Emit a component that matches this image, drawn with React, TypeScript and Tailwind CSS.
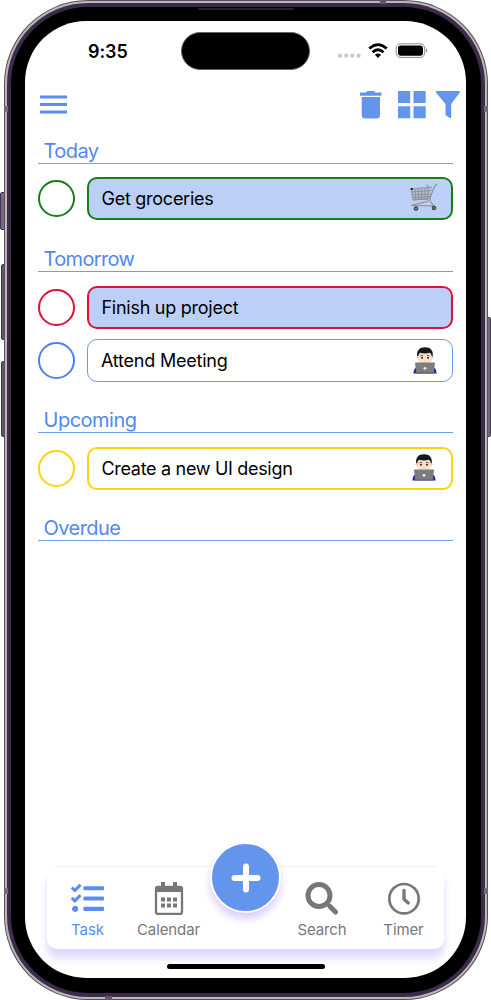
import React from "react";
import { FaTasks } from "react-icons/fa";

function Cart() {
  return (
    <svg width="28" height="29" viewBox="0 0 28 29" fill="none">
      <path d="M1 6L22 4L20 15L3 17Z" fill="#b4bccb" />
      <path d="M1 6L22 4M1.5 9L21.5 7.500M2 12L21 11M2.500 14.500L20.500 13.500M3 17L20 15M1 6L3 17M4.500 6L6 16.500M8 5.500L9 16.500M11.500 5L12 16M15 5L15 16M18.500 4.500L17.500 15.500" stroke="#7f8591" strokeWidth=".7" />
      <path d="M27 .8L24.500 3.500L20 15L21 19.500L24 23M17 1.500L18 5M3 17L17 16L19 18L3 22L1.500 22.500L25 23" stroke="#8c8c90" strokeWidth="1.100" />
      <path d="M16 18.500H21" stroke="#bbb1a7" strokeWidth="1.800" />
      <rect x=".5" y="5" width="2.500" height="2" fill="#2e333b" />
      <circle cx="6" cy="25.500" r="2.300" fill="#494545" />
      <circle cx="24" cy="25" r="2.300" fill="#494545" />
      <circle cx="6" cy="25.500" r=".8" fill="#aaa" />
      <circle cx="24" cy="25" r=".8" fill="#aaa" />
    </svg>
  );
}

function Technologist() {
  return (
    <svg width="24" height="27" viewBox="0 0 24 27">
      <path d="M.3 26.500L1 23Q2 20 6 19.500H18Q22 20 23 23L23.700 26.500Z" fill="#2027ae" />
      <path d="M8.500 14H15.500V19H8.500Z" fill="#e8bfa5" />
      <ellipse cx="12" cy="9.800" rx="7.300" ry="8" fill="#f8dec9" />
      <circle cx="4.700" cy="10.500" r="1.200" fill="#efcdb4" />
      <circle cx="19.300" cy="10.500" r="1.200" fill="#efcdb4" />
      <path d="M4.300 9.500C3.300 3.500 6.500.2 12 .2C17.500.2 20.700 3.500 19.700 9.500L18.700 9Q18.500 7 17 5.800Q12 7 7 5.800Q5.500 7 5.300 9Z" fill="#171819" />
      <path d="M7.500 8.800Q9 7.900 10 8.700M14 8.700Q15 7.900 16.500 8.800" stroke="#50382f" strokeWidth=".8" fill="none" />
      <circle cx="9" cy="10.700" r="1" fill="#302622" />
      <circle cx="15" cy="10.700" r="1" fill="#302622" />
      <path d="M2.800 15.500H21.200Q22 15.500 21.900 16.500L20.800 26H3.200L2.100 16.500Q2 15.500 2.800 15.500Z" fill="#7c7d7f" />
      <path d="M2.500 25.300H21.500V26.500H2.500Z" fill="#66676a" />
      <circle cx="12" cy="21.300" r="1.400" fill="#eee" />
    </svg>
  );
}

function Heading({ children, space }: { children: string; space: string }) {
  return (
    <h2 className={`${space} flex h-[30px] shrink-0 items-end border-b border-[#6f9df0] pl-[5.5px] text-[20px] leading-[24px] text-[#5089ee]`}>
      {children}
    </h2>
  );
}

function Row({ text, circle, card, icon, textStyle }: { text: string; circle: string; card: string; icon?: React.ReactNode; textStyle: string }) {
  return (
    <div className="flex h-[43px] shrink-0 items-center">
      <div className={`size-[37px] shrink-0 rounded-full border-2 ${circle}`} />
      <div className={`ml-[12px] flex h-full flex-1 items-center justify-between rounded-[10px] ${card}`}>
        <span className={`whitespace-nowrap pt-[1px] text-[18px] leading-[24px] text-black ${textStyle}`}>{text}</span>
        {icon}
      </div>
    </div>
  );
}

export default function App() {
  return (
    <div className="relative h-[1000px] w-[491px] overflow-hidden bg-white font-['Inter',sans-serif]">
      <div className="absolute left-0 top-[192px] h-[38px] w-[6px] rounded-l-[2px] border border-[#40364b] bg-[#776b80]" />
      <div className="absolute left-[1px] top-[264px] h-[76px] w-[5px] rounded-l-[2px] border border-[#40364b] bg-[#64576d]" />
      <div className="absolute left-[1px] top-[361px] h-[76px] w-[5px] rounded-l-[2px] border border-[#40364b] bg-[#64576d]" />
      <div className="absolute right-0 top-[317px] h-[120px] w-[5px] rounded-r-[2px] border border-[#40364b] bg-[#776b80]" />

      <div className="relative ml-[4px] h-[1000px] w-[484px] rounded-[84px] bg-[#594e5d] p-[1px]">
        <div className="h-full rounded-[83px] bg-[#bfb7b5] p-[2px]">
          <div className="h-full rounded-[81px] bg-[#3b2c4b] px-[4px] py-[4px]">
            <div className="h-full rounded-[77px] bg-black px-[14px] py-[14px]">
              <div className="flex h-[957px] w-[441px] flex-col overflow-hidden rounded-[61px] bg-white">
                <header className="flex h-[60px] shrink-0 items-start pl-[63px]">
                  <span className="mt-[19px] w-[93px] text-[18px] font-semibold leading-[24px] tracking-[-0.1px] text-black">9:35</span>
                  <div className="mt-[11px] h-[38px] w-[129px] rounded-full border border-[#666] bg-black" />
                  <svg className="ml-[27px] mt-[20px]" width="91" height="20" viewBox="337 41 91 20" fill="none">
                    <g fill="#c8c8c8">
                      <circle cx="340" cy="55.700" r="2.100" /><circle cx="346.200" cy="55.700" r="2.100" /><circle cx="352.400" cy="55.700" r="2.100" /><circle cx="358.600" cy="55.700" r="2.100" />
                    </g>
                    <path d="M369.300 48.600Q378 40.600 386.700 48.600M372.500 52.200Q378 47.300 383.500 52.200" stroke="#000" strokeWidth="2.700" />
                    <path d="M374.900 54.800Q378 52.400 381.100 54.800L378 57.900Z" fill="#000" />
                    <rect x="396.200" y="43.800" width="28.500" height="13.600" rx="4.300" stroke="#888" />
                    <rect x="398" y="45.500" width="25" height="10.200" rx="2.700" fill="#000" />
                    <path d="M426 48.500Q428.500 50.500 426 52.700Z" fill="#888" />
                  </svg>
                </header>

                <nav className="flex h-[47px] shrink-0 items-start justify-between pl-[15px] pr-[5px] pt-[10px]">
                  <svg className="mt-[3px]" width="27" height="21" viewBox="0 0 27 21" fill="#5b8def">
                    <path d="M0 1.500H27V4.500H0ZM0 9H27V12H0ZM0 16.500H27V19.500H0Z" />
                  </svg>
                  <svg width="101" height="28" viewBox="0 0 101 28" fill="#6495ed">
                    <path d="M0 1.500H6L7.500 0H14L15.500 1.500H21.500V4.700H0ZM1.700 6H20V24Q20 27.500 16.500 27.500H5Q1.700 27.500 1.700 24Z" />
                    <path d="M38 0H50.200V12H38ZM53.500 0H65.700V12H53.500ZM38 15.300H50.200V27.300H38ZM53.500 15.300H65.700V27.300H53.500Z" />
                    <path d="M76.500 0H99.300Q100.600 0 99.800 1.500L91.200 13V26Q91 27.700 89.800 27.100L85.500 24V13L76 1.500Q75.200 0 76.500 0Z" />
                  </svg>
                </nav>

                <main className="flex h-[718px] shrink-0 flex-col pl-[13px] pr-[13px]">
                  <Heading space="mt-[6px] mb-[13px] tracking-[-0.55px]">Today</Heading>
                  <Row text="Get groceries" textStyle="tracking-[-0.26px]" circle="border-[#148017]" card="border-2 border-[#148017] bg-[#bbcff7] pl-[12.5px] pr-[13px]" icon={<span className="-mt-[2px]"><Cart /></span>} />
                  <Heading space="mt-[22px] mb-[14px] tracking-[-0.65px]">Tomorrow</Heading>
                  <Row text="Finish up project" textStyle="tracking-[-0.26px]" circle="border-[#df1235]" card="border-2 border-[#df1235] bg-[#bbcff7] pl-[12.5px]" />
                  <div className="h-[10px] shrink-0" />
                  <Row text="Attend Meeting" textStyle="tracking-[-0.22px]" circle="border-[#4a83e9]" card="border border-[#6d99ec] pl-[13px] pr-[15px]" icon={<Technologist />} />
                  <Heading space="mt-[21px] mb-[14px] tracking-[-0.5px]">Upcoming</Heading>
                  <Row text="Create a new UI design" textStyle="tracking-[-0.31px]" circle="border-[#ffd40b]" card="border-2 border-[#ffd40b] pl-[12.5px] pr-[15px]" icon={<span className="-mt-[2px]"><Technologist /></span>} />
                  <Heading space="mt-[21px] tracking-[-0.55px]">Overdue</Heading>
                </main>

                <footer className="relative flex h-[132px] shrink-0 flex-col items-center pt-[20px]">
                  <div className="flex h-[83px] w-[397px] rounded-[10px] bg-white text-[#777] shadow-[0_9px_8px_#dfd7fc]">
                    <div className="flex w-[81px] flex-col items-center pt-[16px] text-[#5b8def]">
                      <FaTasks size={33} />
                      <span className="mt-[6px] text-[15px] leading-[18px] tracking-[-0.1px]">Task</span>
                    </div>
                    <div className="flex w-[81px] flex-col items-center pt-[16px]">
                      <svg width="30" height="33" viewBox="0 0 30 33" fill="none">
                        <rect x="2" y="5" width="26" height="27" rx="2" stroke="#777" strokeWidth="2.300" />
                        <path d="M2 5H28V10H2ZM7 0H11V6H7ZM19 0H23V6H19ZM7 15.500H11V19.500H7ZM13 15.500H17V19.500H13ZM19 15.500H23V19.500H19ZM7 21.500H11V25.500H7ZM13 21.500H17V25.500H13ZM19 21.500H23V25.500H19Z" fill="#777" />
                      </svg>
                      <span className="mt-[6px] text-[15px] leading-[18px] tracking-[-0.1px]">Calendar</span>
                    </div>
                    <div className="ml-[74px] flex w-[78px] flex-col items-center pt-[16px]">
                      <svg width="34" height="34" viewBox="0 0 34 34" fill="none" stroke="#777">
                        <circle cx="14" cy="13.500" r="11" strokeWidth="5" />
                        <path d="M22 22L24 24" strokeWidth="3" />
                        <path d="M25 24.500L30.500 30" strokeWidth="5" strokeLinecap="round" />
                      </svg>
                      <span className="mt-[5px] text-[15px] leading-[18px] tracking-[-0.1px]">Search</span>
                    </div>
                    <div className="ml-[2px] flex w-[81px] flex-col items-center pt-[16px]">
                      <svg width="34" height="34" viewBox="0 0 34 34" fill="none" stroke="#777">
                        <circle cx="17" cy="16.700" r="14.700" strokeWidth="2.700" />
                        <path d="M17 8.500V17.300L21.300 21" strokeWidth="3.300" strokeLinecap="round" />
                      </svg>
                      <span className="mt-[5px] text-[15px] leading-[18px] tracking-[-0.1px]">Timer</span>
                    </div>
                  </div>
                  <div className="mt-[15px] h-[5px] w-[158px] rounded-full bg-black" />
                  <div className="absolute left-[30px] top-[20px] h-px w-[381px] bg-[#efefef]" />
                  <div className="absolute left-[185px] top-[-4px] flex size-[71px] items-center justify-center rounded-full border-2 border-white bg-[#6495ed] shadow-[0_6px_8px_#d9cdfa]">
                    <svg width="30" height="30" viewBox="0 0 30 30" stroke="white" strokeWidth="6" strokeLinecap="round"><path d="M3.500 15H26.500M15 3.500V26.500" /></svg>
                  </div>
                </footer>
              </div>
            </div>
          </div>
        </div>
      </div>
      <div className="absolute left-[198px] top-[8px] h-[2px] w-[96px] rounded-full bg-[#262626]" />
      <div className="absolute left-[105px] top-[996px] h-[4px] w-[7px] bg-[#65546a]" />
      <div className="absolute left-[380px] top-0 h-[4px] w-[6px] bg-[#65546a]" />
      <div className="absolute left-[4px] top-[106px] h-[6px] w-[4px] bg-[#75697a]" />
      <div className="absolute left-[484px] top-[106px] h-[6px] w-[4px] bg-[#75697a]" />
      <div className="absolute left-[4px] top-[888px] h-[6px] w-[4px] bg-[#75697a]" />
      <div className="absolute left-[484px] top-[888px] h-[6px] w-[4px] bg-[#75697a]" />
    </div>
  );
}
